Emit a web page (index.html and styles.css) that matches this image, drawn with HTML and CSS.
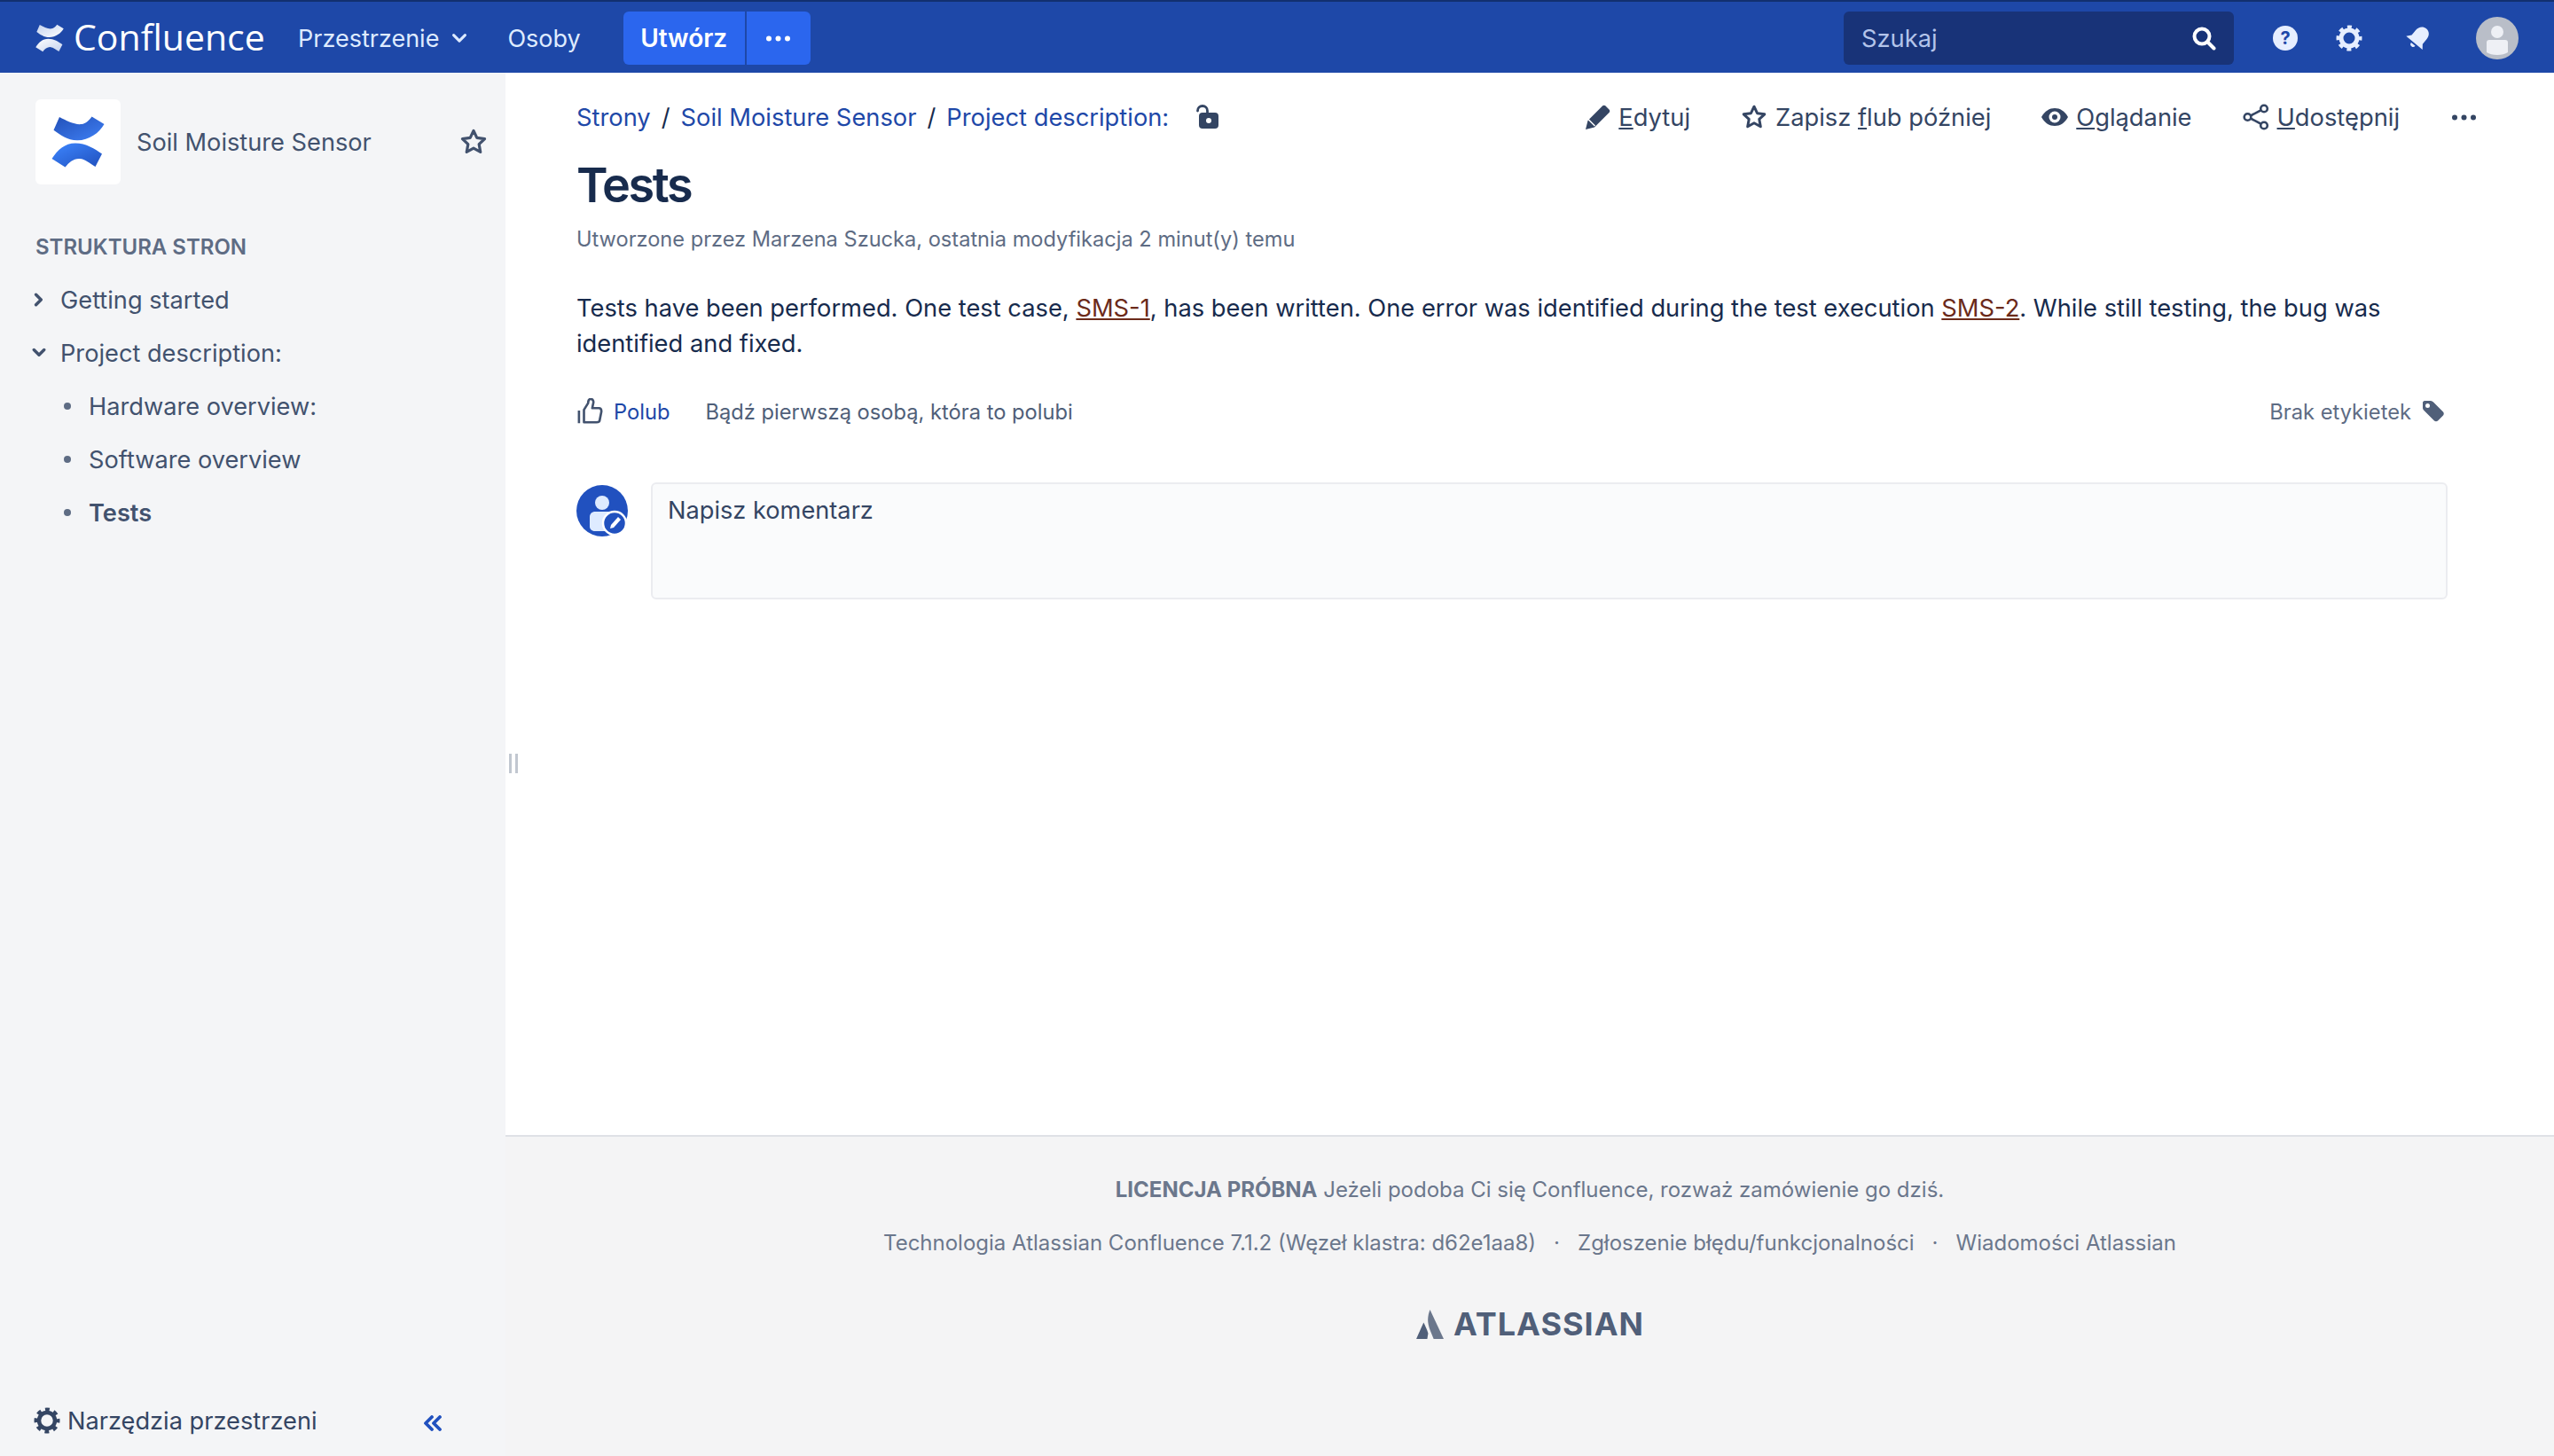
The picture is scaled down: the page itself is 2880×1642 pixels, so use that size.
FILE: index.html
```html
<!DOCTYPE html>
<html>
<head>
  <title>Tests - Soil Moisture Sensor</title>
  <link rel="stylesheet" href="styles.css">
</head>
<body>
  <!-- Top bar -->
  <header class="topbar">
    <div class="brand">
      <svg class="brand-icon" viewBox="18 18 60 60">
        <defs>
          <linearGradient id="brand-top" x1="0" y1="0" x2="1" y2="1"><stop offset="0" stop-color="#c4d2ee"/><stop offset="1" stop-color="#ffffff"/></linearGradient>
          <linearGradient id="brand-bottom" x1="0" y1="0" x2="1" y2="1"><stop offset="0" stop-color="#ffffff"/><stop offset="1" stop-color="#c4d2ee"/></linearGradient>
        </defs>
        <path fill="url(#brand-top)" d="M27 20C35 24 44 29 52 28 57 27.500 60 24 63.500 19.500L77.500 28C72 38 60 46.500 47 46.300 36 46 28 40 20.500 34.700z"/>
        <path fill="url(#brand-bottom)" d="M18.500 67C25 57 33 49.500 45 49.500 57 49.500 67 56 75 61.500L67.500 76C61 72 56 67.500 50 67 43 66.500 38 71 33.500 76.500z"/>
      </svg>
      <span class="brand-name">Confluence</span>
    </div>
    <a class="nav-link">Przestrzenie
      <svg class="nav-chevron" viewBox="0 0 14 10"><path d="M2 2l5 5 5-5" fill="none" stroke="#deebff" stroke-width="2.4" stroke-linecap="round" stroke-linejoin="round"/></svg>
    </a>
    <a class="nav-link nav-people">Osoby</a>
    <div class="create">
      <span class="create-main">Utwórz</span>
      <span class="create-more">
        <svg class="dots" viewBox="0 0 27 7"><circle cx="3" cy="3.500" r="3" fill="#fff"/><circle cx="13.500" cy="3.500" r="3" fill="#fff"/><circle cx="24" cy="3.500" r="3" fill="#fff"/></svg>
      </span>
    </div>
    <div class="topbar-right">
      <div class="search">
        <span>Szukaj</span>
        <svg class="search-icon" viewBox="0 0 28 28"><circle cx="12" cy="12" r="8.500" fill="none" stroke="#fff" stroke-width="4"/><path d="M18.500 18.500l7 7" stroke="#fff" stroke-width="4" stroke-linecap="round"/></svg>
      </div>
      <svg class="top-icon help-icon" viewBox="0 0 30 30"><circle cx="15" cy="15" r="14" fill="#e6eeff"/><text x="15" y="22" class="help-mark">?</text></svg>
      <svg class="top-icon gear-icon" viewBox="0 0 30 30"><circle cx="15" cy="15" r="9" fill="none" stroke="#e6eeff" stroke-width="5"/><circle cx="15" cy="15" r="12.500" fill="none" stroke="#e6eeff" stroke-width="4" stroke-dasharray="4.910 4.910" stroke-dashoffset="2.450"/></svg>
      <svg class="top-icon bell-icon" viewBox="0 0 30 30"><g transform="rotate(40 15 15)" fill="#e6eeff"><path d="M15 1c5 0 8 4 8 9v7l4 5H3l4-5v-7c0-5 3-9 8-9z"/><path d="M12 24h6c0 2-1 3-3 3s-3-1-3-3z"/></g></svg>
      <div class="avatar">
        <svg viewBox="0 0 48 48"><circle cx="24" cy="24" r="24" fill="#b9bec8"/><circle cx="24" cy="17" r="7" fill="#eef0f5"/><path fill="#eef0f5" d="M12 29c0-2 1-3 3-3h18c2 0 3 1 3 3v11c-3 2-7 3-12 3s-9-1-12-3z"/></svg>
      </div>
    </div>
  </header>

  <div class="layout">
    <!-- Sidebar -->
    <aside class="sidebar">
      <div class="space">
        <div class="space-logo">
          <svg viewBox="0 0 96 96">
            <defs>
              <linearGradient id="grad-top" x1="0" y1="0" x2="1" y2="1"><stop offset="0" stop-color="#2250b8"/><stop offset="1" stop-color="#3f80f5"/></linearGradient>
              <linearGradient id="grad-bottom" x1="0" y1="0" x2="1" y2="1"><stop offset="0" stop-color="#3d86ff"/><stop offset="1" stop-color="#2050bd"/></linearGradient>
            </defs>
            <path fill="url(#grad-top)" d="M27 20C35 24 44 29 52 28 57 27.500 60 24 63.500 19.500L77.500 28C72 38 60 46.500 47 46.300 36 46 28 40 20.500 34.700z"/>
            <path fill="url(#grad-bottom)" d="M18.500 67C25 57 33 49.500 45 49.500 57 49.500 67 56 75 61.500L67.500 76C61 72 56 67.500 50 67 43 66.500 38 71 33.500 76.500z"/>
          </svg>
        </div>
        <span class="space-name">Soil Moisture Sensor</span>
        <svg class="space-star" viewBox="0 0 28 28"><path d="M14 3l3.300 7 7.700 1-5.600 5.300 1.400 7.700L14 20.300 7.200 24l1.400-7.700L3 11l7.700-1z" fill="none" stroke="#42526e" stroke-width="2.800" stroke-linejoin="round"/></svg>
      </div>

      <h5 class="tree-title">STRUKTURA STRON</h5>
      <ul class="tree">
        <li class="tree-row"><svg class="tree-toggle" viewBox="0 0 14 14"><path d="M4 2l5 5-5 5" fill="none" stroke="#42526e" stroke-width="3" stroke-linecap="round" stroke-linejoin="round"/></svg>Getting started</li>
        <li class="tree-row"><svg class="tree-toggle" viewBox="0 0 14 14"><path d="M2 4l5 5 5-5" fill="none" stroke="#42526e" stroke-width="3" stroke-linecap="round" stroke-linejoin="round"/></svg>Project description:</li>
        <li class="tree-row tree-child"><span class="tree-dot"></span>Hardware overview:</li>
        <li class="tree-row tree-child"><span class="tree-dot"></span>Software overview</li>
        <li class="tree-row tree-child tree-current"><span class="tree-dot"></span>Tests</li>
      </ul>

      <div class="sidebar-foot">
        <svg class="tools-icon" viewBox="0 0 30 30"><circle cx="15" cy="15" r="9" fill="none" stroke="#344563" stroke-width="4.500"/><circle cx="15" cy="15" r="12.500" fill="none" stroke="#344563" stroke-width="4" stroke-dasharray="4.910 4.910" stroke-dashoffset="2.450"/></svg>
        <span class="tools-label">Narzędzia przestrzeni</span>
        <svg class="collapse-icon" viewBox="0 0 22 18"><path d="M10 2L3 9l7 7M19 2l-7 7 7 7" fill="none" stroke="#2151bf" stroke-width="3.800" stroke-linecap="round" stroke-linejoin="round"/></svg>
      </div>
    </aside>
    <div class="splitter"></div>

    <!-- Page -->
    <div class="main">
      <main class="page">
        <div class="page-top">
          <nav class="crumbs">
            <a>Strony</a><span class="crumb-sep">/</span><a>Soil Moisture Sensor</a><span class="crumb-sep">/</span><a>Project description:</a>
            <svg class="lock-icon" viewBox="0 0 28 28"><path d="M1.500 7a5.500 5.500 0 0 1 11 0v4" fill="none" stroke="#344563" stroke-width="2.800" stroke-linecap="round"/><rect x="3" y="9" width="22" height="18" rx="4" fill="#344563"/><circle cx="14" cy="18" r="3" fill="#fff"/></svg>
          </nav>
          <div class="actions">
            <span class="action"><svg viewBox="0 0 30 30"><path d="M21 2.500c1-1 2.500-1 3.500 0l4 4c1 1 1 2.500 0 3.500L12 26.500 2 29l2.500-10z" fill="#344563"/><path d="M5 17.500l7.500 7.500" stroke="#fff" stroke-width="1.500"/></svg><span><u>E</u>dytuj</span></span>
            <span class="action"><svg viewBox="0 0 28 28"><path d="M14 3l3.300 7 7.700 1-5.600 5.300 1.400 7.700L14 20.300 7.200 24l1.400-7.700L3 11l7.700-1z" fill="none" stroke="#344563" stroke-width="2.800" stroke-linejoin="round"/></svg><span>Zapisz <u>f</u>lub później</span></span>
            <span class="action"><svg viewBox="0 0 30 30"><path d="M0 15C4 8 9 5 15 5s11 3 15 10c-4 7-9 10-15 10S4 22 0 15z" fill="#344563"/><circle cx="15" cy="15" r="6.500" fill="#fff"/><circle cx="15" cy="15" r="3" fill="#344563"/></svg><span><u>O</u>glądanie</span></span>
            <span class="action action-last"><svg viewBox="0 0 30 30"><path d="M23 6L6 15l17 9" fill="none" stroke="#344563" stroke-width="2.600"/><circle cx="24" cy="5.500" r="3.800" fill="#fff" stroke="#344563" stroke-width="2.600"/><circle cx="5.500" cy="15" r="3.800" fill="#fff" stroke="#344563" stroke-width="2.600"/><circle cx="24" cy="24.500" r="3.800" fill="#fff" stroke="#344563" stroke-width="2.600"/></svg><span><u>U</u>dostępnij</span></span>
            <svg class="dots" viewBox="0 0 27 7"><circle cx="3" cy="3.500" r="3" fill="#344563"/><circle cx="13.500" cy="3.500" r="3" fill="#344563"/><circle cx="24" cy="3.500" r="3" fill="#344563"/></svg>
          </div>
        </div>

        <h1 class="page-title">Tests</h1>
        <p class="page-meta">Utworzone przez Marzena Szucka, ostatnia modyfikacja 2 minut(y) temu</p>
        <p class="page-body">Tests have been performed. One test case, <a>SMS-1</a>, has been written. One error was identified during the test execution <a>SMS-2</a>. While still testing, the bug was identified and fixed.</p>

        <div class="like-row">
          <svg class="like-icon" viewBox="0 0 32 32"><path d="M2 15v15M8 14l5-8c0-3 1-5 3-5 3 0 4 3 3 6l-1 5h8c2 0 3 2 3 4l-2 10c0 2-2 3-4 3H8z" fill="none" stroke="#42526e" stroke-width="2.800" stroke-linejoin="round"/></svg>
          <a class="like-link">Polub</a>
          <span class="like-note">Bądź pierwszą osobą, która to polubi</span>
          <span class="labels">Brak etykietek
            <svg class="label-icon" viewBox="0 0 26 26"><path fill="#505f79" fill-rule="evenodd" d="M3 1h7c1 0 2 .5 3 1.500l11 11c1 1 1 3 0 4l-6 6c-1 1-3 1-4 0L3 12.500C2 11.500 1 10.500 1 9V3c0-1 1-2 2-2zm3.500 3a2.500 2.500 0 1 0 0 5 2.500 2.500 0 0 0 0-5z"/></svg>
          </span>
        </div>

        <div class="comment">
          <svg class="comment-avatar" viewBox="0 0 58 58"><circle cx="29" cy="29" r="29" fill="#2151bf"/><circle cx="29" cy="20" r="8" fill="#deebff"/><path fill="#deebff" d="M15 36c0-4 3-6 6-6h16c3 0 6 2 6 6v11c0 3-3 5-6 5H21c-3 0-6-2-6-5z"/><circle cx="43" cy="43" r="13" fill="#2151bf" stroke="#fff" stroke-width="2.500"/><path d="M47 36l3 3-8 9-4 1 1-4z" fill="#fff"/></svg>
          <div class="comment-box">Napisz komentarz</div>
        </div>
      </main>

      <footer class="footer">
        <p class="footer-line"><b>LICENCJA PRÓBNA</b> Jeżeli podoba Ci się Confluence, rozważ zamówienie go dziś.</p>
        <p class="footer-line footer-links"><span>Technologia Atlassian Confluence 7.1.2 (Węzeł klastra: d62e1aa8)</span><span class="footer-sep">·</span><span>Zgłoszenie błędu/funkcjonalności</span><span class="footer-sep">·</span><span>Wiadomości Atlassian</span></p>
        <div class="atlassian">
          <svg viewBox="0 0 32 32"><path fill="#6b778c" d="M16 0c-3 8-3 14 0 22l4 10h11z"/><path fill="#505f79" d="M9 14L1 32h12l1-6c-1-4-3-8-5-12z"/></svg>
          <span>ATLASSIAN</span>
        </div>
      </footer>
    </div>
  </div>
</body>
</html>
```

FILE: styles.css
```css
/* Basic reset */
* {
  box-sizing: border-box;
  margin: 0;
  padding: 0;
}

html,
body {
  height: 100%;
}

body {
  font-family: Inter, "Noto Sans", sans-serif;
  font-size: 27.3px;
  color: #172b4d;
  background-color: #ffffff;
  display: flex;
  flex-direction: column;
  overflow: hidden;
}

svg {
  display: block;
  flex-shrink: 0;
}

.dots {
  width: 27px;
  height: 7px;
}

/* Top bar */
.topbar {
  height: 82px;
  flex-shrink: 0;
  display: flex;
  align-items: center;
  padding: 2px 40px 0;
  background-color: #1e48a8;
  border-top: 2px solid #12306f;
  color: #deebff;
}

.brand {
  display: flex;
  align-items: center;
  width: 296px;
  color: #ffffff;
}

.brand-icon {
  width: 32px;
  height: 32px;
  margin-right: 11px;
}

.brand-name {
  font-family: "Open Sans", sans-serif;
  font-size: 41px;
  line-height: 50px;
  margin-top: -4px;
}

.nav-link {
  display: flex;
  align-items: center;
  font-size: 27px;
}

.nav-chevron {
  width: 18px;
  height: 13px;
  margin-left: 14px;
}

.nav-people {
  margin-left: 45px;
}

.create {
  display: flex;
  height: 60px;
  margin-left: 48px;
  color: #ffffff;
}

.create-main,
.create-more {
  display: flex;
  align-items: center;
  justify-content: center;
  background-color: #2b66ee;
}

.create-main {
  width: 137px;
  font-size: 28px;
  font-weight: 600;
  border-radius: 6px 0 0 6px;
}

.create-more {
  width: 72px;
  margin-left: 2px;
  border-radius: 0 6px 6px 0;
}

.topbar-right {
  display: flex;
  align-items: center;
  margin-left: auto;
}

.search {
  width: 440px;
  height: 60px;
  display: flex;
  align-items: center;
  justify-content: space-between;
  padding: 0 20px;
  background-color: #183378;
  border-radius: 6px;
  color: #b3c4ea;
}

.search-icon {
  width: 28px;
  height: 28px;
}

.top-icon {
  width: 30px;
  height: 30px;
}

.help-icon {
  margin-left: 43px;
}

.help-mark {
  font-size: 20px;
  font-weight: 700;
  fill: #1e48a8;
  text-anchor: middle;
}

.gear-icon {
  margin-left: 42px;
}

.bell-icon {
  margin-left: 48px;
}

.avatar {
  width: 48px;
  height: 48px;
  margin-left: 50px;
}

/* Page layout */
.layout {
  flex: 1;
  display: flex;
  min-height: 0;
  position: relative;
}

.sidebar {
  width: 570px;
  flex-shrink: 0;
  display: flex;
  flex-direction: column;
  padding: 30px 0 0 40px;
  background-color: #f4f5f7;
  color: #42526e;
}

.space {
  display: flex;
  align-items: center;
  height: 96px;
}

.space-logo {
  width: 96px;
  height: 96px;
  background-color: #ffffff;
  border-radius: 6px;
}

.space-name {
  margin-left: 18px;
  font-size: 27.2px;
}

.space-star {
  width: 32px;
  height: 32px;
  margin-left: auto;
  margin-right: 20px;
}

.tree-title {
  margin-top: 55px;
  font-size: 24px;
  line-height: 32px;
  font-weight: 600;
  color: #5e6c84;
}

.tree {
  list-style: none;
  margin-top: 13px;
}

.tree-row {
  display: flex;
  align-items: center;
  height: 60px;
  font-size: 27.2px;
}

.tree-toggle {
  width: 16px;
  height: 16px;
  margin-right: 16px;
  margin-left: -4px;
}

.tree-child {
  padding-left: 32px;
}

.tree-dot {
  width: 8px;
  height: 8px;
  margin-right: 20px;
  border-radius: 50%;
  background-color: #5e6c84;
}

.tree-current {
  font-weight: 600;
}

.sidebar-foot {
  display: flex;
  align-items: center;
  margin-top: auto;
  height: 80px;
  color: #344563;
}

.tools-icon {
  width: 30px;
  height: 30px;
  margin-left: -2px;
}

.tools-label {
  margin-left: 8px;
  font-size: 27.2px;
}

.collapse-icon {
  width: 22px;
  height: 18px;
  margin-left: 119px;
  margin-top: 6px;
}

.splitter {
  position: absolute;
  left: 574px;
  top: 768px;
  width: 10px;
  height: 22px;
  border-left: 3px solid #c1c7d0;
  border-right: 3px solid #c1c7d0;
}

.main {
  flex: 1;
  min-width: 0;
  display: flex;
  flex-direction: column;
}

.page {
  flex: 1;
  padding: 30px 120px 0 80px;
}

.page-top {
  display: flex;
  align-items: center;
  justify-content: space-between;
  height: 40px;
  margin-right: -32px;
}

.crumbs {
  display: flex;
  align-items: center;
  color: #1e48a8;
}

.crumb-sep {
  margin: 0 12px;
  color: #172b4d;
}

.lock-icon {
  width: 28px;
  height: 28px;
  margin-left: 31px;
}

.actions {
  display: flex;
  align-items: center;
  color: #344563;
}

.action {
  display: flex;
  align-items: center;
  margin-right: 57px;
}

.action-last {
  margin-right: 59px;
}

.action svg {
  width: 30px;
  height: 30px;
  margin-right: 9px;
}

.page-title {
  margin-top: 27px;
  font-size: 54px;
  line-height: 60px;
  font-weight: 600;
  letter-spacing: -2.4px;
}

.page-meta {
  margin-top: 15px;
  font-size: 23.6px;
  line-height: 32px;
  color: #5e6c84;
}

.page-body {
  margin-top: 42px;
  line-height: 40px;
}

.page-body a {
  color: #6b2a1a;
  text-decoration: underline;
}

.like-row {
  display: flex;
  align-items: center;
  height: 40px;
  margin-top: 36px;
  font-size: 23.7px;
  color: #505f79;
}

.like-icon {
  width: 30px;
  height: 30px;
  margin-left: 1px;
}

.like-link {
  margin-left: 11px;
  color: #1e48a8;
}

.like-note {
  margin-left: 40px;
}

.labels {
  display: flex;
  align-items: center;
  margin-left: auto;
  margin-right: 3px;
  color: #5e6c84;
}

.label-icon {
  width: 26px;
  height: 26px;
  margin-left: 12px;
}

.comment {
  display: flex;
  margin-top: 60px;
}

.comment-avatar {
  width: 58px;
  height: 58px;
  margin-top: 3px;
}

.comment-box {
  flex: 1;
  height: 132px;
  margin-left: 26px;
  padding: 13px 17px;
  font-size: 27.2px;
  line-height: 34px;
  background-color: #fafbfc;
  border: 2px solid #ebecf0;
  border-radius: 6px;
  color: #344563;
}

/* Footer */
.footer {
  height: 362px;
  flex-shrink: 0;
  padding-top: 44px;
  background-color: #f4f4f5;
  border-top: 2px solid #dfe1e6;
  text-align: center;
  font-size: 24px;
  color: #6b778c;
}

.footer-line {
  line-height: 32px;
}

.footer-links {
  margin-top: 28px;
}

.footer-sep {
  margin: 0 20px;
}

.atlassian {
  display: flex;
  align-items: center;
  justify-content: center;
  gap: 10px;
  margin-top: 53px;
  font-size: 36px;
  font-weight: 700;
  letter-spacing: 1px;
  color: #505f79;
}

.atlassian svg {
  width: 33px;
  height: 33px;
}
```
